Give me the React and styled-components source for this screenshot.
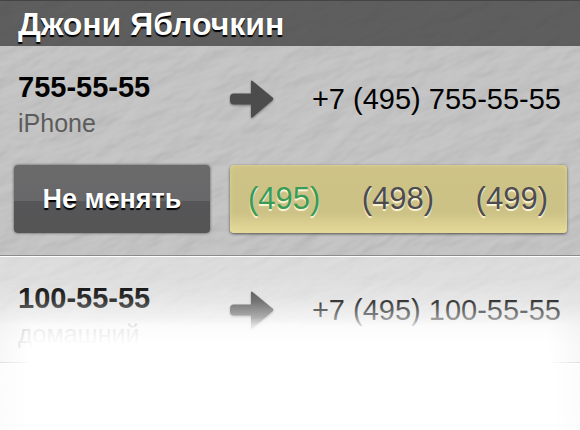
import styled, { createGlobalStyle } from "styled-components"
import { useState } from "react"

const codes = ["495", "498", "499"]

const contact = {
  name: "Джони Яблочкин",
  phones: [
    { number: "755-55-55", label: "iPhone" },
    { number: "100-55-55", label: "домашний" },
  ],
}

function Leather() {
  return (
    <Texture aria-hidden="true">
      <filter id="leather" x="0" y="0" width="100%" height="100%" colorInterpolationFilters="sRGB">
        <feTurbulence type="fractalNoise" baseFrequency="0.025 0.055" numOctaves="3" seed="8" />
        <feDiffuseLighting surfaceScale="-3" diffuseConstant="1" lightingColor="#ffffff">
          <feDistantLight azimuth="250" elevation="60" />
        </feDiffuseLighting>
        <feColorMatrix values="0.13 0 0 0 0.65  0.13 0 0 0 0.65  0.13 0 0 0 0.65  0 0 0 1 0" />
      </filter>
      <rect width="100%" height="100%" filter="url(#leather)" />
    </Texture>
  )
}

function Arrow() {
  return (
    <ArrowIcon viewBox="0 0 44 40" aria-hidden="true">
      <path d="M4 14.5H21V2.8Q21 0.8 22.6 2L42.6 18.6Q44 19.8 42.6 21.2L22.6 38.2Q21 39.4 21 37.4V25.5H4Q0 25.5 0 21.5V18.5Q0 14.5 4 14.5Z" />
    </ArrowIcon>
  )
}

function Phone({ phone, code }) {
  return (
    <Info>
      <Source>
        <Number>{phone.number}</Number>
        <Label>{phone.label}</Label>
      </Source>
      <Arrow />
      <Result>+7 ({code}) {phone.number}</Result>
    </Info>
  )
}

export default function App() {
  const [code, setCode] = useState("495")
  const [first, second] = contact.phones

  return (
    <Page>
      <GlobalStyle />
      <Leather />
      <Header>
        <h1>{contact.name}</h1>
      </Header>

      <Row>
        <Phone phone={first} code={code} />
        <Actions>
          <KeepButton type="button">Не менять</KeepButton>
          <Codes aria-label="Код города">
            {codes.map((item) => (
              <Code key={item} $active={item === code}>
                <input
                  type="radio"
                  name="code"
                  value={item}
                  checked={item === code}
                  onChange={() => setCode(item)}
                />
                ({item})
              </Code>
            ))}
          </Codes>
        </Actions>
      </Row>

      <LastRow>
        <Phone phone={second} code="495" />
      </LastRow>
      <Rest />
      <Fade />
    </Page>
  )
}

const GlobalStyle = createGlobalStyle`
  * {
    box-sizing: border-box;
  }
  body {
    margin: 0;
    background: #fff;
    font-family: "Liberation Sans", Arial, sans-serif;
  }
`
const Page = styled.main`
  position: relative;
  isolation: isolate;
  display: flex;
  flex-direction: column;
  min-height: 100vh;
  overflow: hidden;
`
const Texture = styled.svg`
  position: absolute;
  top: -50%;
  left: -50%;
  z-index: -1;
  width: 200%;
  height: 200%;
  transform: rotate(-22deg);
`
const Header = styled.header`
  display: flex;
  align-items: center;
  height: 46px;
  padding: 0 18px;
  border-top: 1px solid #444;
  background: rgba(56, 56, 56, 0.73);

  h1 {
    margin: 0;
    font-size: 32px;
    line-height: 32px;
    font-weight: 700;
    color: #fff;
    text-shadow: 0 2px 1px #000;
  }
`
const Row = styled.section`
  border-bottom: 1px solid #8c8c8c;
  box-shadow: 0 1px 0 #fff;
`
const LastRow = styled(Row)`
  margin-top: 1px;
  background: linear-gradient(rgba(255, 255, 255, 0.4), rgba(255, 255, 255, 0.6));
`
const Rest = styled.div`
  flex-grow: 1;
  background: rgba(255, 255, 255, 0.8);
`
const Info = styled.div`
  display: grid;
  grid-template-columns: 212px 44px 1fr;
  align-items: center;
  height: 105px;
  padding: 0 19px 0 18px;
`
const Source = styled.div`
  padding-top: 12px;
`
const Number = styled.div`
  font-size: 29px;
  line-height: 36px;
  font-weight: 700;
  color: #000;
`
const Label = styled.div`
  font-size: 25px;
  line-height: 36px;
  color: #5c5c5c;
`
const ArrowIcon = styled.svg`
  width: 44px;
  height: 40px;
  fill: #4c4c4c;
  overflow: visible;
  filter: drop-shadow(0 1px 1px rgba(0, 0, 0, 0.4));
`
const Result = styled.div`
  font-size: 29px;
  line-height: 36px;
  text-align: right;
  white-space: nowrap;
  color: #000;
`
const Actions = styled.div`
  display: grid;
  grid-template-columns: 196px 1fr;
  gap: 20px;
  padding: 14px 13px 22px 14px;
`
const KeepButton = styled.button`
  height: 68px;
  padding: 0;
  border: 0;
  border-radius: 4px;
  background: linear-gradient(#6a6a6b 0, #68686a 53%, #565658 53%, #545455 100%);
  box-shadow: 0 0 3px rgba(0, 0, 0, 0.6);
  font-family: inherit;
  font-size: 27px;
  font-weight: 700;
  color: #fff;
  text-shadow: 0 2px 1px #000;
`
const Codes = styled.fieldset`
  display: flex;
  align-items: center;
  justify-content: space-between;
  min-width: 0;
  height: 68px;
  margin: 0;
  padding: 0 19px 0 18px;
  border: 0;
  border-radius: 4px;
  background: linear-gradient(#cec386 0, #cdc286 70%, #e3d896 96%);
  box-shadow: 0 1px 3px rgba(0, 0, 0, 0.6), inset 0 0 5px rgba(232, 222, 160, 0.6);
`
const Code = styled.label`
  display: flex;
  font-size: 31px;
  line-height: 36px;
  color: ${(props) => (props.$active ? "#389c56" : "#4c4c50")};
  text-shadow: 0 2px 1px #fff8dc;
  cursor: pointer;

  input {
    appearance: none;
    width: 0;
    height: 0;
    margin: 0;
  }
`
const Fade = styled.div`
  position: absolute;
  inset: 257px 0 0;
  pointer-events: none;
  background: linear-gradient(
    rgba(255, 255, 255, 0) 20px,
    rgba(255, 255, 255, 0.22) 44px,
    rgba(255, 255, 255, 0.54) 60px,
    rgba(255, 255, 255, 0.86) 69px,
    rgba(255, 255, 255, 0.98) 86px,
    #fff 96px
  );
  mask-image: linear-gradient(to right, rgba(0, 0, 0, 0.7), #000 32px, #000 calc(100% - 32px), rgba(0, 0, 0, 0.7));
`
